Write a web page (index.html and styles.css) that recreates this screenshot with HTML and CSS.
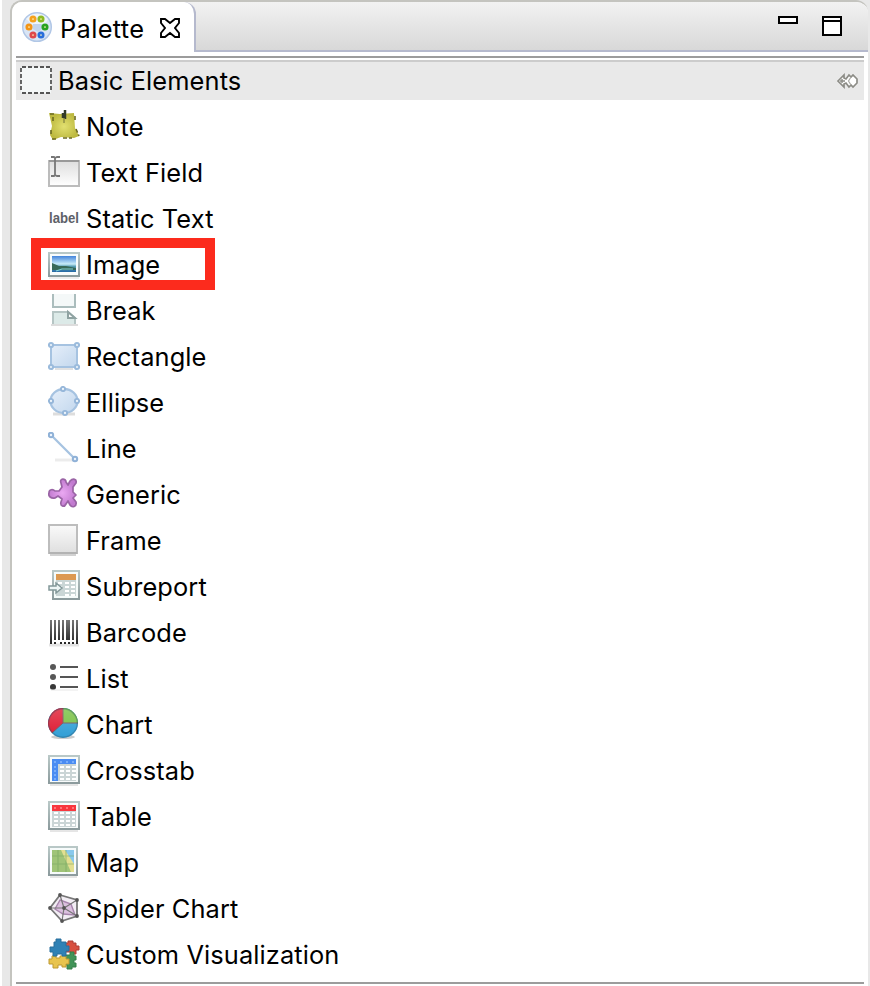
FILE: index.html
```
<!DOCTYPE html>
<html lang="en">
<head>
<meta charset="utf-8">
<title>Palette</title>
<link rel="stylesheet" href="styles.css">
</head>
<body>
<svg class="defs" width="0" height="0" aria-hidden="true">
  <defs>
    <linearGradient id="gray" x2="0" y2="1"><stop stop-color="#dedede"/><stop offset="1" stop-color="#fff"/></linearGradient>
    <linearGradient id="frame" x2="0" y2="1"><stop stop-color="#fafafa"/><stop offset="1" stop-color="#dfdfdf"/></linearGradient>
    <linearGradient id="blue" x2="1" y2="1"><stop stop-color="#e6effa"/><stop offset="1" stop-color="#c2d7ed"/></linearGradient>
    <linearGradient id="edge" x2="0" y2="1"><stop stop-color="#b9c8c7"/><stop offset="1" stop-color="#8c9b9d"/></linearGradient>
    <linearGradient id="sky" x2="0" y2="1"><stop stop-color="#4384dc"/><stop offset=".5" stop-color="#c9ecf8"/><stop offset=".65" stop-color="#5aa0b4"/><stop offset="1" stop-color="#2568a5"/></linearGradient>
    <linearGradient id="bar" x2="0" y2="1"><stop stop-color="#777"/><stop offset="1" stop-color="#252525"/></linearGradient>
    <radialGradient id="note"><stop stop-color="#e2e070"/><stop offset="1" stop-color="#bdb940"/></radialGradient>
    <radialGradient id="purple"><stop stop-color="#eaa8f2"/><stop offset="1" stop-color="#c27bd0"/></radialGradient>
    <linearGradient id="shine" x2="0" y2="1"><stop stop-color="#fff" stop-opacity=".2"/><stop offset="1" stop-color="#fff" stop-opacity="0"/></linearGradient>
  </defs>
</svg>
<main class="view">
  <header class="tabbar">
    <div class="tab">
      <svg class="tab-icon" viewBox="0 0 32 32">
        <circle cx="16" cy="16" r="14.3" fill="#d9e5f5" stroke="#b1c7e6" stroke-width="1.5"/>
        <path d="M5 8A14 14 0 0 1 27 8L22 18L12 14Z" fill="#edf4fc"/>
        <path d="M12 13h9v5l-4 3-5-3Z" fill="#c1d4ed"/>
        <g fill="#fff5b8" stroke-width="2.7">
          <circle cx="12" cy="8" r="2.2" stroke="#f5a11d"/><circle cx="20" cy="8" r="2.2" stroke="#8dbb25"/>
          <circle cx="8" cy="16" r="2.2" stroke="#f39416"/><circle cx="24" cy="16" r="2.2" stroke="#28a221"/>
          <circle cx="12" cy="24" r="2.2" stroke="#df494b"/><circle cx="20" cy="24" r="2.2" stroke="#286edb"/>
        </g>
      </svg>
      <span class="tab-title">Palette</span>
      <svg class="close" viewBox="0 0 22 22"><path d="M2 2H6L11 6L16 2H20V6L16 11L20 16V20H16L11 16L6 20H2V16L6 11L2 6Z" fill="#fff" stroke="#000" stroke-width="1.9"/></svg>
    </div>
    <div class="controls">
      <svg width="20" height="20" viewBox="0 0 20 20"><path d="M1 1H19V7H1Z" fill="#fff" stroke="#000" stroke-width="2"/></svg>
      <svg width="20" height="20" viewBox="0 0 20 20"><path d="M1 1H19V19H1ZM1 5H19" fill="#fff" stroke="#000" stroke-width="2"/></svg>
    </div>
  </header>
  <section class="drawer">
    <h1 class="drawer-head">
      <svg class="drawer-icon" viewBox="0 0 32 28"><path d="M1 1H31V27H1Z" fill="#f4f7f7"/><path d="M2 1H30M2 27H30" stroke="#555" stroke-width="1.8" stroke-dasharray="4 2"/><path d="M1 2V26M31 2V26" stroke="#555" stroke-width="1.8" stroke-dasharray="4 2"/></svg>
      <span>Basic Elements</span>
      <svg class="pin" viewBox="0 0 22 16"><path d="M1 8L7 2V5L9 6L12 2L14 4L16 2L20 6V10L16 14L14 12L12 14L9 10L7 11V14Z" fill="#fff" stroke="#8c8c86" stroke-width="1.7"/><path d="M3 8H8M5 6V10" fill="none" stroke="#8c8c86" stroke-width="1.4"/><path d="M14 4L11.500 8L14 12" fill="none" stroke="#aaaaa5" stroke-width="1.2"/></svg>
    </h1>
    <ul class="items">
      <li><svg viewBox="0 0 32 32"><path d="M1 3L12 4L26 3L27 18L31 26L26 28L13 27L5 30L2 25L4 16Z" fill="url(#note)"/><path d="M2 4H8M5 7V11M3 20V24M4 29H10M15 28H24M27 6V10M28 19L31 26" stroke="#6b6921" stroke-width="1.6" stroke-dasharray="4 2" fill="none"/><path d="M15 3V8M17 0V9" stroke="#333b28" stroke-width="2.5"/><path d="M16 8V13" stroke="#909044" stroke-width="1.5"/></svg>Note</li>
      <li><svg viewBox="0 0 32 32"><path d="M1 5H31V30H1Z" fill="url(#gray)" stroke="#bcbcbc" stroke-width="2"/><path d="M1 5H31" stroke="#999" stroke-width="2"/><path d="M3 1H6L7 2L9 1H12M7 2V19M3 20H6L7 19L9 20H12" fill="none" stroke="#777" stroke-width="1.8"/></svg>Text Field</li>
      <li><svg class="label-icon" viewBox="0 0 32 32"><text x="1" y="21" class="label-glyph" textLength="30" lengthAdjust="spacingAndGlyphs">label</text></svg>Static Text</li>
      <li><svg viewBox="0 0 32 32"><path d="M1 5H31V28H1Z" fill="#f8fcfc" stroke="url(#edge)" stroke-width="2"/><path d="M4 8H28V24H4Z" fill="url(#sky)"/><path d="M4 15L11 18L18 18L28 20V22H4Z" fill="#386957"/><path d="M8 23L14 21H25" stroke="#81d0d7" stroke-width="1.2" fill="none"/><path d="M1 30H31" stroke="#ddd"/></svg>Image<span class="highlight"></span></li>
      <li><svg viewBox="0 0 32 32"><path d="M5 0V13H27V0" fill="#f4f8f8" stroke="#abbdbd" stroke-width="2"/><path d="M5 31V18H20L27 24V31Z" fill="#dceae8"/><path d="M5 30V18H20L27 24V30" fill="none" stroke="#b5c5c4" stroke-width="2"/><path d="M20 18V24H27Z" fill="#fff" stroke="#8fa3a2" stroke-width="2"/><path d="M3 31H30" stroke="#ddd" stroke-width="2"/></svg>Break</li>
      <li><svg viewBox="0 0 32 32"><path d="M3 5H29V27H3Z" fill="url(#blue)" stroke="#a6c3e1" stroke-width="2"/><path d="M7 29H25" stroke="#e2e2e2" stroke-width="2"/><g fill="#edf4fb" stroke="#9bbbdc" stroke-width="2"><circle cx="3" cy="5" r="2.1"/><circle cx="29" cy="5" r="2.1"/><circle cx="3" cy="27" r="2.1"/><circle cx="29" cy="27" r="2.1"/></g></svg>Rectangle</li>
      <li><svg viewBox="0 0 32 32"><path d="M5 28H27" stroke="#ddd" stroke-width="3"/><ellipse cx="16" cy="15" rx="13.5" ry="12" fill="url(#blue)" stroke="#a6c3e1" stroke-width="2.3"/><g fill="#edf4fb" stroke="#95b6d9" stroke-width="1.9"><circle cx="15" cy="3" r="2.1"/><circle cx="3" cy="15" r="2.1"/><circle cx="29" cy="15" r="2.1"/><circle cx="17" cy="27" r="2.1"/></g></svg>Ellipse</li>
      <li><svg viewBox="0 0 32 32"><path d="M7 28H27" stroke="#ececec" stroke-width="3"/><path d="M3 3L27 27" stroke="#a6c3e1" stroke-width="2.3"/><g fill="#edf4fb" stroke="#8fb1d7" stroke-width="2"><circle cx="3" cy="3" r="2.2"/><circle cx="27" cy="27" r="2.2"/></g></svg>Line</li>
      <li><svg viewBox="0 0 32 32"><path d="M13 5C11 0 18 0 18 4L20 7L22 3C25 0 29 1 28 5L25 9V14L28 17L25 20L28 24C29 29 24 30 22 27L20 23L18 26C16 30 12 28 13 24L14 21L10 18L7 20C3 21 0 18 1 15C1 11 5 11 7 13L11 13L14 9Z" fill="url(#purple)" stroke="#9a64a5" stroke-width="1.7" stroke-linejoin="round"/></svg>Generic</li>
      <li><svg viewBox="0 0 32 32"><path d="M1 1H29V29H1Z" fill="url(#frame)" stroke="#bdbdbd" stroke-width="2"/><path d="M1 29H29M2 31H28" stroke="#aaa" stroke-width="1.5" opacity=".7"/></svg>Frame</li>
      <li><svg viewBox="0 0 32 32"><path d="M5 1H31V29H5Z" fill="#f5fbfa" stroke="url(#edge)" stroke-width="2"/><path d="M8 4H28V26H8Z" fill="#cad6d6"/><path d="M8 4H28V10H8Z" fill="#dc9951"/><path d="M10 13H14M17 13H21M23 13H27M10 17H14M17 17H21M23 17H27M17 21H21M23 21H27M17 25H21M23 25H27" stroke="#fff" stroke-width="2"/><path d="M1 16H8V13L14 18L8 23V20H1Z" fill="#eef6f6" stroke="#839899" stroke-width="1.5"/></svg>Subreport</li>
      <li><svg viewBox="0 0 32 32"><path d="M1 29H31" stroke="#e4e4e4" stroke-width="3"/><path d="M2 4H4V28H2ZM6 4H8V24H6ZM10 4H12V24H10ZM14 4H16V24H14ZM18 4H22V24H18ZM24 4H26V24H24ZM28 4H30V28H28ZM6 26H8V28H6ZM12 26H14V28H12ZM16 26H18V28H16ZM20 26H22V28H20ZM24 26H26V28H24Z" fill="url(#bar)"/></svg>Barcode</li>
      <li><svg viewBox="0 0 32 32"><g fill="#575757"><circle cx="5" cy="5" r="3"/><circle cx="5" cy="15" r="3"/><circle cx="5" cy="25" r="3" fill="#383838"/></g><path d="M12 4H30V6H12ZM12 14H30V16H12ZM12 24H30V26H12Z" fill="#555"/><path d="M3 28H30" stroke="#e8e8e8"/></svg>List</li>
      <li><svg viewBox="0 0 32 32"><ellipse cx="15" cy="29" rx="12" ry="2" fill="#ccc"/><circle cx="15" cy="15" r="15" fill="#329fd6"/><path d="M15 15V0A15 15 0 0 0 4 25Z" fill="#df1b32"/><path d="M15 15V0A15 15 0 0 1 30 15Z" fill="#77c142"/><path d="M15 0V15H30M15 15L4 25" stroke="#75525b" stroke-width="1" fill="none"/><circle cx="15" cy="15" r="14.3" fill="url(#shine)" stroke="#35566a" stroke-opacity=".35" stroke-width="1.4"/></svg>Chart</li>
      <li><svg viewBox="0 0 32 32"><path d="M1 2H31V29H1Z" fill="#f8fbfb" stroke="url(#edge)" stroke-width="2"/><path d="M4 5H28V27H4Z" fill="#cbd5d6"/><path d="M4 5H28V10H10V27H4Z" fill="#4a8cf2"/><path d="M12 13H16M18 13H22M24 13H28M12 17H16M18 17H22M24 17H28M12 21H16M18 21H22M24 21H28M12 25H16M18 25H22M24 25H28" stroke="#fff" stroke-width="2"/><path d="M6 8H8M12 8H14M18 8H20M24 8H26M6 13H8M6 17H8M6 21H8M6 25H8" stroke="#78adfa" stroke-width="2"/><path d="M2 31H30" stroke="#ccc"/></svg>Crosstab</li>
      <li><svg viewBox="0 0 32 32"><path d="M1 2H31V29H1Z" fill="#f8fbfb" stroke="url(#edge)" stroke-width="2"/><path d="M4 5H28V27H4Z" fill="#cbd5d6"/><path d="M4 5H28V11H4Z" fill="#f8373e"/><path d="M6 13H10M12 13H16M18 13H22M24 13H27M6 17H10M12 17H16M18 17H22M24 17H27M6 21H10M12 21H16M18 21H22M24 21H27M6 25H10M12 25H16M18 25H22M24 25H27" stroke="#fff" stroke-width="2"/><path d="M6 8H8M12 8H14M18 8H20M24 8H26" stroke="#ff7579" stroke-width="2"/><path d="M2 31H30" stroke="#ccc"/></svg>Table</li>
      <li><svg viewBox="0 0 32 32"><path d="M1 1H29V29H1Z" fill="#f7fbfb" stroke="url(#edge)" stroke-width="2"/><path d="M4 4H26V26H4Z" fill="#a0c478"/><path d="M15 4H26V20Z" fill="#89c9ed"/><path d="M13 4H17L26 18V26H23Z" fill="#e3df91"/><path d="M4 10H26M4 18H26M10 4V26M18 4V26" stroke="#73a45f" stroke-width="1.2" opacity=".5"/><path d="M2 31H29" stroke="#ccc"/></svg>Map</li>
      <li><svg viewBox="0 0 32 32"><path d="M12 3L29 8V24L14 29L2 16Z" fill="#f2edf4" stroke="#777" stroke-width="1.8"/><path d="M12 8L23 12L27 23L15 22L7 17Z" fill="#dbc0df" stroke="#a785ad" stroke-width="1.4"/><path d="M12 3L16 16L29 8M16 16L29 24M16 16L14 29M16 16L2 16" fill="none" stroke="#777" stroke-width="1.2"/><g fill="#555"><circle cx="12" cy="3" r="1.9"/><circle cx="29" cy="8" r="1.9"/><circle cx="29" cy="24" r="1.9"/><circle cx="14" cy="29" r="1.9"/><circle cx="2" cy="16" r="1.9"/><circle cx="16" cy="16" r="1.9"/></g></svg>Spider Chart</li>
      <li><svg viewBox="0 0 32 32"><g stroke-width="1"><path d="M17 5H20V3H25V5H28V8H31V12H28V16H23V14H17Z" fill="#d85040" stroke="#ad3c35"/><path d="M18 17H22V14H26V18H28V22H26V25H28V29H24V31H19V27H17Z" fill="#419458" stroke="#347f49"/><path d="M4 18H8V20H12V18H18V21H21V26H18V29H14V27H10V30H5V26H1V21H4Z" fill="#e8c44e" stroke="#be9932"/><path d="M6 4H8V1H13V4H18V8H21V13H18V18H14V16H9V18H5V14H2V9H6Z" fill="#2f81b5" stroke="#286e9c"/></g></svg>Custom Visualization</li>
    </ul>
  </section>
</main>
</body>
</html>
```
FILE: styles.css
```
* { box-sizing: border-box; }
body {
  margin: 0;
  height: 986px;
  overflow: hidden;
  padding: 0 2px 0 10px;
  background: linear-gradient(90deg, #fff 2px, #e8e8e8 2px);
  color: #000;
  font: 25.4px/32px Inter, "Liberation Sans", sans-serif;
  letter-spacing: .11px;
}
.defs { position: absolute; }
svg { display: block; flex: none; }
.view {
  height: 986px;
  border: solid #c4c4bf;
  border-width: 2px 0 0 2px;
  border-radius: 12px 12px 0 0;
  background: #fff;
  overflow: hidden;
}
.tabbar {
  height: 50px;
  display: flex;
  justify-content: space-between;
  background: linear-gradient(#f2f2f2, #d8d8d8);
  border-bottom: 2px solid #b5b9cd;
}
.tab {
  display: flex;
  align-items: flex-start;
  width: 184px;
  height: 50px;
  padding: 9px 0 0 9px;
  background: #fff;
  border-right: 2px solid #b5b9cd;
  border-radius: 0 12px 0 0;
}
.tab-icon { width: 32px; height: 32px; }
.tab-title { width: 90px; margin: 2px 0 0 7px; letter-spacing: .35px; }
.close { width: 22px; height: 22px; margin: 6px 0 0 9px; }
.controls {
  display: flex;
  gap: 24px;
  padding: 14px 26px 0 0;
}
.drawer {
  height: 928px;
  margin: 4px 4px 0;
  border: solid #9c9c9c;
  border-width: 2px 0;
}
.drawer-head {
  display: flex;
  align-items: center;
  height: 40px;
  margin: 2px 0 0;
  padding: 0 5px 0 4px;
  border-top: 2px solid #ccc;
  background: #e9e9e9;
  font: inherit;
}
.drawer-icon { width: 32px; height: 28px; margin-top: -3px; }
.drawer-head span { margin-left: 6px; }
.pin { width: 22px; height: 16px; margin-left: auto; }
.items {
  margin: 4px 0 0;
  padding: 0 0 0 32px;
  list-style: none;
}
.items li {
  position: relative;
  display: flex;
  align-items: center;
  gap: 6px;
  height: 46px;
  white-space: pre;
}
.items svg { width: 32px; height: 32px; margin-top: -2px; }
.items .label-icon { overflow: visible; }
.label-glyph {
  font: bold 15px "Liberation Sans", sans-serif;
  letter-spacing: 0;
  fill: #5d6168;
}
.highlight {
  position: absolute;
  top: -4px;
  left: -17px;
  width: 184px;
  height: 52px;
  border: 10px solid #fc2b1d;
}
```
